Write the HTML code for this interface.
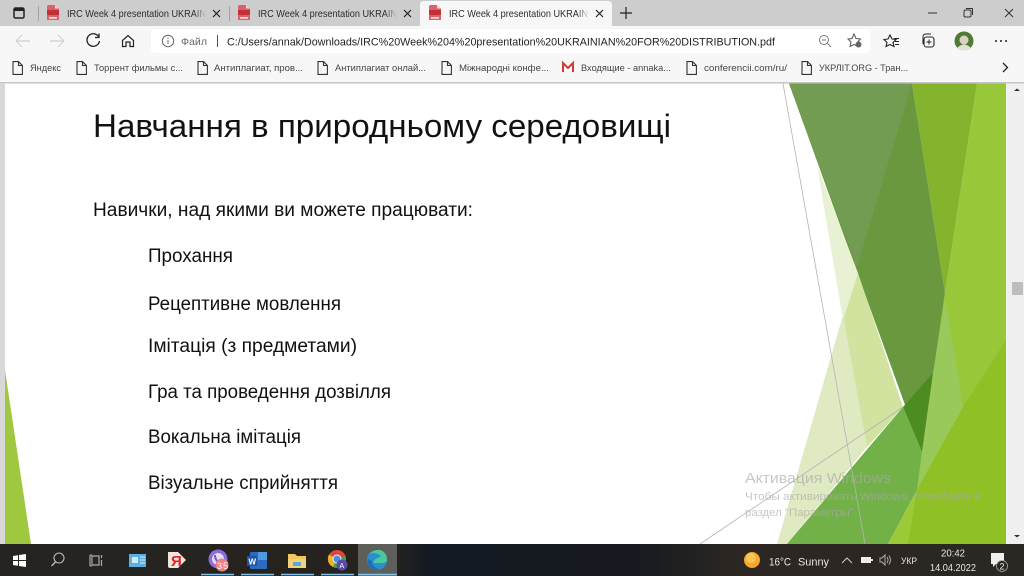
<!DOCTYPE html>
<html><head><meta charset="utf-8"><title>PDF</title>
<style>
html,body{margin:0;padding:0;width:1024px;height:576px;overflow:hidden;background:#fff}
svg{display:block;filter:blur(.3px)}
text{font-family:"Liberation Sans","Noto Sans CJK SC",sans-serif}
</style></head><body>
<svg width="1024" height="576" viewBox="0 0 1024 576" xmlns="http://www.w3.org/2000/svg">
<defs>
<g id="doc" fill="none" stroke="#333" stroke-width="1.1"><path d="M1 0.6H6.5L10.4 4.5V13.4H1Z"/><path d="M6.5 .6V4.5H10.4"/></g>
<g id="pdf"><path d="M2 0H9L13 3.500V15H1V1Z" fill="#d8636a"/><rect x="1" y="5" width="12" height="5" fill="#c23038"/><path d="M3 12H11V13.800H3Z" fill="#f3d0d2"/><path d="M9 0V3.500H13Z" fill="#f3d0d2"/></g>
<g id="x" stroke="#222" stroke-width="1.200"><path d="M0 0L7 7M7 0L0 7"/></g>
<linearGradient id="fd" x1="0" x2="1" y1="0" y2="0"><stop offset="0" stop-color="#cdcdcd" stop-opacity="0"/><stop offset="1" stop-color="#cdcdcd"/></linearGradient>
<linearGradient id="fa" x1="0" x2="1" y1="0" y2="0"><stop offset="0" stop-color="#f7f7f7" stop-opacity="0"/><stop offset="1" stop-color="#f7f7f7"/></linearGradient>
</defs>

<!-- chrome -->
<rect width="1024" height="26" fill="#cdcdcd"/>
<rect y="26" width="1024" height="56" fill="#f7f7f7"/>
<path d="M420 26V5Q420 1 424 1H608Q612 1 612 5V26Z" fill="#f7f7f7"/>
<rect x="38" y="6" width="1" height="15" fill="#a5a5a5"/>
<rect x="229" y="6" width="1" height="15" fill="#a5a5a5"/>
<rect x="14" y="8" width="10" height="10" rx="1.500" fill="none" stroke="#222" stroke-width="1.500"/>
<rect x="14" y="8" width="10" height="3" fill="#222"/>

<use href="#pdf" x="46" y="5"/>
<text x="67" y="17" font-size="10.500" fill="#2c2c2c" textLength="139" lengthAdjust="spacingAndGlyphs">IRC Week 4 presentation UKRAIN</text>
<rect x="194" y="6" width="12" height="14" fill="url(#fd)"/>
<use href="#x" x="213" y="10"/>
<use href="#pdf" x="237" y="5"/>
<text x="258" y="17" font-size="10.500" fill="#2c2c2c" textLength="139" lengthAdjust="spacingAndGlyphs">IRC Week 4 presentation UKRAIN</text>
<rect x="385" y="6" width="12" height="14" fill="url(#fd)"/>
<use href="#x" x="404" y="10"/>
<use href="#pdf" x="428" y="5"/>
<text x="449" y="17" font-size="10.500" fill="#2c2c2c" textLength="139" lengthAdjust="spacingAndGlyphs">IRC Week 4 presentation UKRAIN</text>
<rect x="577" y="6" width="12" height="14" fill="url(#fa)"/>
<use href="#x" x="596" y="10"/>
<path d="M620 13H632M626 7V19" stroke="#222" stroke-width="1.200"/>
<path d="M928 13H937" stroke="#333" stroke-width="1"/>
<rect x="964" y="10" width="7" height="7" rx="1.500" fill="none" stroke="#333"/><path d="M966 8.500H972.500V15" fill="none" stroke="#333"/>
<path d="M1005 9L1013 17M1013 9L1005 17" stroke="#333"/>

<!-- nav -->
<path d="M16 41H30M16 41L22 35M16 41L22 47" stroke="#d0d0d0" stroke-width="1.200" fill="none"/>
<path d="M50 41H64M64 41L58 35M64 41L58 47" stroke="#d0d0d0" stroke-width="1.200" fill="none"/>
<path d="M98.500 36.500A6.300 6.300 0 1 0 99.500 41" fill="none" stroke="#222" stroke-width="1.300"/><path d="M99 33.500V37.500H95" fill="none" stroke="#222" stroke-width="1.300"/>
<path d="M122.500 40.500L128 35.500L133.500 40.500V46.500H130V42H126V46.500H122.500Z" fill="none" stroke="#222" stroke-width="1.200"/>
<rect x="151" y="29" width="719" height="24" rx="4" fill="#fff"/>
<circle cx="168" cy="41" r="5.700" fill="none" stroke="#666"/><path d="M168 40V44M168 37.500V38.700" stroke="#666"/>
<text x="181" y="45" font-size="10.500" fill="#666" textLength="26" lengthAdjust="spacingAndGlyphs">Файл</text>
<rect x="217" y="35" width="1" height="12" fill="#555"/>
<text x="227" y="45.500" font-size="11" fill="#222" textLength="548" lengthAdjust="spacingAndGlyphs">C:/Users/annak/Downloads/IRC%20Week%204%20presentation%20UKRAINIAN%20FOR%20DISTRIBUTION.pdf</text>
<circle cx="824" cy="40" r="4.500" fill="none" stroke="#777"/><path d="M822 40H826M827.500 43.500L831 47" stroke="#777" fill="none"/>
<path d="M854 34L856 38.500L860.500 39L857.500 42L858.500 46.500L854 44.500L850 46.500L851 42L848 39L852 38.500Z" fill="none" stroke="#555"/><circle cx="858.500" cy="44.500" r="3" fill="#666"/>
<path d="M890 35L892 39L896 39.500L893 42.500L894 46.500L890 44.500L886 46.500L887 42.500L884 39.500L888 39Z" fill="none" stroke="#222" stroke-width="1.100"/><path d="M894 38.500H899M895 41.500H899M895 44.500H899" stroke="#222"/>
<rect x="924" y="37" width="10" height="10" rx="2.500" fill="none" stroke="#222" stroke-width="1.100"/><path d="M923 44V37Q923 34 926 34H931M929 39.500V44.500M926.500 42H931.500" fill="none" stroke="#222"/>
<circle cx="964" cy="41" r="9.500" fill="#4f7a32"/><circle cx="964" cy="40" r="4.500" fill="#d8d2c4"/><path d="M957 48Q964 41 971 48L966 50.500H961Z" fill="#e3e0d6"/>
<circle cx="996" cy="41" r="1" fill="#222"/><circle cx="1001" cy="41" r="1" fill="#222"/><circle cx="1006" cy="41" r="1" fill="#222"/>

<!-- bookmarks -->
<use href="#doc" x="12" y="61"/>
<text x="30" y="71" font-size="9.500" fill="#444" textLength="31" lengthAdjust="spacingAndGlyphs">Яндекс</text>
<use href="#doc" x="76" y="61"/>
<text x="94" y="71" font-size="9.500" fill="#444" textLength="89" lengthAdjust="spacingAndGlyphs">Торрент фильмы с...</text>
<use href="#doc" x="197" y="61"/>
<text x="214" y="71" font-size="9.500" fill="#444" textLength="89" lengthAdjust="spacingAndGlyphs">Антиплагиат, пров...</text>
<use href="#doc" x="317" y="61"/>
<text x="335" y="71" font-size="9.500" fill="#444" textLength="91" lengthAdjust="spacingAndGlyphs">Антиплагиат онлай...</text>
<use href="#doc" x="441" y="61"/>
<text x="459" y="71" font-size="9.500" fill="#444" textLength="90" lengthAdjust="spacingAndGlyphs">Міжнародні конфе...</text>
<path d="M563 72V63L568 68L573 63V72" fill="none" stroke="#d33c35" stroke-width="2"/>
<text x="581" y="71" font-size="9.500" fill="#444" textLength="90" lengthAdjust="spacingAndGlyphs">Входящие - annaka...</text>
<use href="#doc" x="686" y="61"/>
<text x="704" y="71" font-size="9.500" fill="#444" textLength="83" lengthAdjust="spacingAndGlyphs">conferencii.com/ru/</text>
<use href="#doc" x="801" y="61"/>
<text x="819" y="71" font-size="9.500" fill="#444" textLength="89" lengthAdjust="spacingAndGlyphs">УКРЛІТ.ORG - Тран...</text>
<path d="M1003 63L1007.500 67.500L1003 72" fill="none" stroke="#222" stroke-width="1.300"/>
<rect y="82" width="1024" height="1.500" fill="#c6c6c6"/>

<!-- page -->
<rect x="0" y="83" width="5" height="461" fill="#d8d8d8"/>
<rect x="5" y="83.500" width="1001" height="461" fill="#fff"/>
<rect x="1006" y="83.500" width="18" height="461" fill="#f0f0f0"/>
<path d="M1014 91L1017 88.500L1020 91Z" fill="#333"/>
<rect x="1012" y="282" width="11" height="13" fill="#bdbdbd"/>
<path d="M1014 535L1017 537.500L1020 535Z" fill="#333"/>
<path d="M5 370L31 544H5Z" fill="#a0c83f"/>

<!-- art -->
<path d="M977 83.500H1006V345L917 544H905L922 452L945 293Z" fill="#98c73a"/>
<path d="M912 83.500H977L945 293Z" fill="#84b42e"/>
<path d="M789 83.500H912L945 293L922 452Z" fill="#69983e"/>
<path d="M789 83.500H912L857 267Z" fill="#719c52"/>
<path d="M817 165L858 273L843 320Z" fill="#e9f1d4"/>
<path d="M858 273L903 407L867 447L843 320Z" fill="#d2e3a0"/>
<path d="M843 315L867 447L787 544H777Z" fill="#dfeac2"/>
<path d="M903 407L922 452L917 490L888 544H787Z" fill="#71b147"/>
<path d="M933 373L903 407L922 452Z" fill="#4c8c20"/>
<path d="M947 310L963 407L917 490L922 452L933 373L945 300Z" fill="#98c95a"/>
<path d="M888 544L917 490L914 544Z" fill="#9bca38"/>
<path d="M1006 340V544H908L917 490L963 407Z" fill="#8fc126"/>
<path d="M783 83.500L865 544" stroke="#b4b4b4" stroke-width=".8" fill="none"/>
<path d="M700 544L903 407" stroke="#b4b4b4" stroke-width=".8" fill="none"/>

<!-- slide text -->
<text x="93" y="137" font-size="32" fill="#111" textLength="578" lengthAdjust="spacingAndGlyphs">Навчання в природньому середовищі</text>
<text x="93" y="216" font-size="19" fill="#111" textLength="380" lengthAdjust="spacingAndGlyphs">Навички, над якими ви можете працювати:</text>
<text x="148" y="262" font-size="19" fill="#111" textLength="85" lengthAdjust="spacingAndGlyphs">Прохання</text>
<text x="148" y="310" font-size="19" fill="#111" textLength="193" lengthAdjust="spacingAndGlyphs">Рецептивне мовлення</text>
<text x="148" y="352" font-size="19" fill="#111" textLength="209" lengthAdjust="spacingAndGlyphs">Імітація (з предметами)</text>
<text x="148" y="398" font-size="19" fill="#111" textLength="243" lengthAdjust="spacingAndGlyphs">Гра та проведення дозвілля</text>
<text x="148" y="443" font-size="19" fill="#111" textLength="153" lengthAdjust="spacingAndGlyphs">Вокальна імітація</text>
<text x="148" y="489" font-size="19" fill="#111" textLength="190" lengthAdjust="spacingAndGlyphs">Візуальне сприйняття</text>

<!-- watermark -->
<text x="745" y="483" font-size="15" fill="#a9a9a9" fill-opacity=".65" textLength="146" lengthAdjust="spacingAndGlyphs">Активация Windows</text>
<text x="745" y="500" font-size="11" fill="#a9a9a9" fill-opacity=".65" textLength="236" lengthAdjust="spacingAndGlyphs">Чтобы активировать Windows, перейдите в</text>
<text x="745" y="516" font-size="11" fill="#a9a9a9" fill-opacity=".65" textLength="112" lengthAdjust="spacingAndGlyphs">раздел "Параметры".</text>

<!-- taskbar -->
<defs><linearGradient id="tb" x1="0" x2="1" y1="0" y2="0"><stop offset="0" stop-color="#262420"/><stop offset=".38" stop-color="#26231f"/><stop offset=".42" stop-color="#141a22"/><stop offset=".62" stop-color="#161a20"/><stop offset=".72" stop-color="#2c2722"/><stop offset="1" stop-color="#2b2723"/></linearGradient></defs>
<rect y="544" width="1024" height="32" fill="url(#tb)"/>
<rect x="358" y="544" width="39" height="32" fill="#5e5e5a"/>
<path d="M13 556L18 555.200V560H13ZM19 555L26 554V560H19ZM13 561H18V565.800L13 565ZM19 561H26V567L19 566Z" fill="#fff"/>
<circle cx="59" cy="558" r="5" fill="none" stroke="#bbb" stroke-width="1.100"/><path d="M55.500 562L51.500 566" stroke="#bbb" stroke-width="1.300"/>
<path d="M92 556H99V565H92ZM90 555V566M101.500 555V558M101.500 560V566" fill="none" stroke="#aaa" stroke-width="1.200"/><path d="M90 555H92M90 566H92" stroke="#aaa"/>
<rect x="129" y="554" width="17" height="13" fill="#5ab0e2"/><rect x="132" y="557" width="6" height="6" fill="#cfe9f7"/><path d="M140 557H145M140 560H145M140 563H145" stroke="#d5ecf8"/>
<path d="M168 552H178L186 560L178 568H170Q168 568 168 566Z" fill="#efe4de"/>
<text x="171" y="566" font-size="15" font-weight="bold" fill="#d8262c">Я</text>
<circle cx="218" cy="559" r="9.500" fill="#8b6bd9"/><circle cx="218" cy="559" r="6" fill="#e3dcf6"/><path d="M215 555Q215 562 222 563" stroke="#7a56cc" stroke-width="2" fill="none"/>
<circle cx="222" cy="565" r="6.500" fill="#ef7f80"/><text x="217" y="569" font-size="9" fill="#fff" textLength="11">35</text>
<rect x="250" y="552" width="17" height="17" rx="1" fill="#2b6cbe"/><rect x="258" y="552" width="9" height="8" fill="#4a9be0"/><rect x="247" y="556" width="10" height="10" fill="#1d55a5"/><text x="248.500" y="564.500" font-size="8" font-weight="bold" fill="#fff">W</text>
<path d="M288 554H295L297 556H306V568H288Z" fill="#f2c55e"/><rect x="288" y="559" width="18" height="9" fill="#f0d27b"/><rect x="293" y="562" width="8" height="4" fill="#5ea8d8"/>
<circle cx="337" cy="559" r="9" fill="#e0453a"/><path d="M337 559L329 554.500A9 9 0 0 0 333 567Z" fill="#e4b62e"/><path d="M337 559L333 567A9 9 0 0 0 345.500 556Z" fill="#3ca655"/><circle cx="337" cy="559" r="4" fill="#4a8de5" stroke="#eee"/>
<circle cx="342" cy="565" r="5.500" fill="#5a4aa8"/><text x="339.500" y="568" font-size="7" fill="#fff">A</text>
<circle cx="377" cy="560" r="10" fill="#2a8ecf"/><path d="M368 556Q372 549 380 550Q387 552 387 560Q387 563 381 563H373Q375 557 381 557Q378 553 373 553Q370 553 368 556Z" fill="#49c8a0"/><path d="M372 561Q372 568 380 569Q373 571 369 566Q367 563 368 559Z" fill="#1b6fb5"/>
<path d="M201 574.500H234M241 574.500H274M281 574.500H314M321 574.500H354M358 574.500H397" stroke="#84bfe6" stroke-width="1.500"/>

<circle cx="752" cy="560" r="8" fill="#f5a92c"/><circle cx="751" cy="558" r="5" fill="#f8c453"/>
<text x="769" y="565.500" font-size="11" fill="#e6e6e6" textLength="22" lengthAdjust="spacingAndGlyphs">16°C</text>
<text x="798" y="565.500" font-size="11" fill="#e6e6e6" textLength="31" lengthAdjust="spacingAndGlyphs">Sunny</text>
<path d="M842 563L847 558L852 563" fill="none" stroke="#ccc"/>
<rect x="861" y="557" width="10" height="6" fill="#eee"/><rect x="871" y="559" width="2" height="2" fill="#ddd"/>
<path d="M880 558H882L885 555V565L882 562H880Z" fill="none" stroke="#aaa"/><path d="M887 557Q889 560 887 563M889 555.500Q892 560 889 564.500" fill="none" stroke="#aaa"/>
<text x="901" y="564" font-size="9.500" fill="#e6e6e6" textLength="16" lengthAdjust="spacingAndGlyphs">УКР</text>
<text x="941" y="556.500" font-size="10" fill="#e6e6e6" textLength="24" lengthAdjust="spacingAndGlyphs">20:42</text>
<text x="930" y="571" font-size="10" fill="#e6e6e6" textLength="46" lengthAdjust="spacingAndGlyphs">14.04.2022</text>
<path d="M991 553H1004V564H996L993 567V564H991Z" fill="#eee"/>
<circle cx="1002" cy="566" r="5.500" fill="#2c2723" stroke="#aaa" stroke-width=".8"/><text x="999.500" y="569.500" font-size="9" fill="#eee">2</text>
</svg>
</body></html>
